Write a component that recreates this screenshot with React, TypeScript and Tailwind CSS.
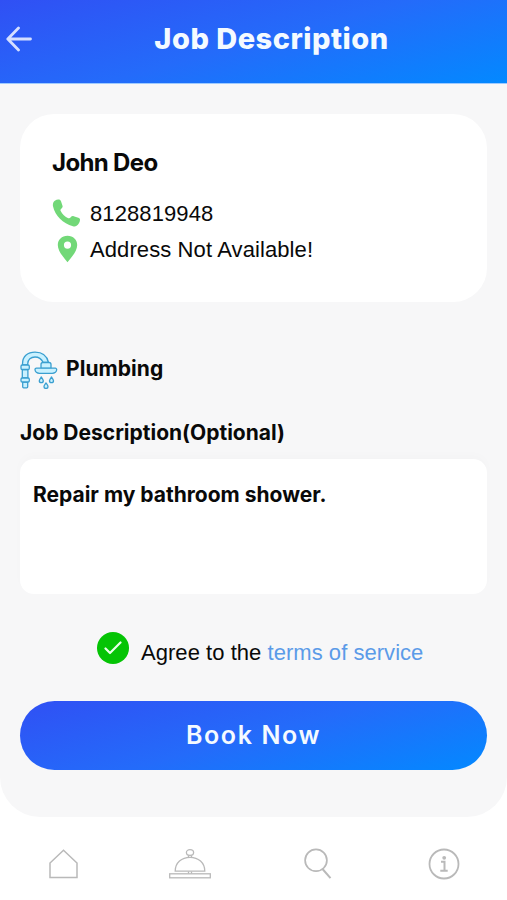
import { useState } from "react";

function ShowerIcon() {
  return (
    <svg
      width="38"
      height="38"
      viewBox="0 0 38 38"
      fill="#c9f1ff"
      stroke="#3a9fd0"
      strokeWidth="1.3"
      strokeLinejoin="round"
    >
      <path d="M2.5 14v-1C2.5 5 8 1.2 15 1.2S27 5 28.5 11.5h-5.3C21.5 8 19 6 15 6s-7.300 2.500-7.300 7v1z" />
      <path d="M2.300 18.500h5.600v8.500H2.300zM2.700 31h5v4.800a1 1 0 0 1-1 1h-3a1 1 0 0 1-1-1z" />
      <rect x="1" y="14" width="8.300" height="4.500" rx="1.200" />
      <rect x="1" y="27" width="8.300" height="4" rx="1.200" />
      <path d="M21 17.500v-4a2 2 0 0 1 2-2h6a2 2 0 0 1 2 2v4z" />
      <path d="M16.500 17.200h18.800a1.400 1.400 0 0 1 1.400 1.400c0 2-2 3.700-4.500 3.700H19.500c-2.500 0-4.500-1.700-4.500-3.700a1.400 1.400 0 0 1 1.500-1.400z" />
      <path d="M21.300 26c1.300 1.800 2 2.700 2 3.700a2 2 0 0 1-4 0c0-1 .7-1.900 2-3.700z" />
      <path d="M31.500 26c1.300 1.800 2 2.700 2 3.700a2 2 0 0 1-4 0c0-1 .7-1.900 2-3.700z" />
      <path d="M26 32c1.300 1.800 2 2.500 2 3.500a2 2 0 0 1-4 0c0-1 .7-1.700 2-3.500z" />
    </svg>
  );
}

function BottomNav() {
  return (
    <nav className="grid h-[83px] grid-cols-4 items-center justify-items-center bg-white pt-[10px] text-[#b9b9b9]">
      <button aria-label="Home">
        <svg width="44" height="34" viewBox="0 0 44 34" fill="none" stroke="currentColor" strokeWidth="1.500">
          <path d="M9 30.500V16L22.500 3.200 36 16v14.500z" />
        </svg>
      </button>
      <button aria-label="Services">
        <svg width="44" height="34" viewBox="0 0 44 34" fill="none" stroke="currentColor" strokeWidth="1.300">
          <ellipse cx="22" cy="5.500" rx="3.600" ry="2.900" />
          <path d="M20.500 8.200v2M23.500 8.200v2M20.500 24.500v2M23.500 24.500v2" />
          <path d="M7.200 24.200C7.200 15.700 13.700 10.300 22 10.300S36.800 15.700 36.800 24.200z" />
          <rect x="1.700" y="26.800" width="40.600" height="4" />
        </svg>
      </button>
      <button aria-label="Search">
        <svg width="44" height="34" viewBox="0 0 44 34" fill="none" stroke="currentColor" strokeWidth="1.700">
          <circle cx="21" cy="13.300" r="10.900" />
          <path d="M27.500 22l8 9.200" strokeWidth="2" />
        </svg>
      </button>
      <button aria-label="Info">
        <svg width="44" height="34" viewBox="0 0 44 34" fill="none" stroke="currentColor" strokeWidth="1.800">
          <circle cx="22" cy="17" r="14.500" />
          <circle cx="22.200" cy="10.800" r="1.900" fill="currentColor" stroke="none" />
          <path d="M19 14.800h3.500v8.700M18.300 23.700h7.400" strokeWidth="2" />
        </svg>
      </button>
    </nav>
  );
}

export default function App() {
  const [description, setDescription] = useState("Repair my bathroom shower.");
  const [agreed, setAgreed] = useState(true);

  return (
    <div className="flex h-[900px] w-[507px] flex-col overflow-hidden bg-white font-['Inter','Liberation_Sans',sans-serif] text-[#090909]">
      <header className="grid h-[84px] shrink-0 grid-cols-[40px_1fr_40px] items-center border-b border-[#9fcbff] bg-linear-[165deg] from-[#3050f4] via-[#246bfa] to-[#0389ff] bg-origin-border pb-1.5">
        <button aria-label="Back" className="pl-1.5">
          <svg width="27" height="26" viewBox="0 0 27 26" fill="none" stroke="#d5dfff" strokeWidth="2.800" strokeLinecap="round" strokeLinejoin="round">
            <path d="M24.500 13H2M12.500 2L1.800 13l10.700 11" />
          </svg>
        </button>
        <h1 className="pl-9 text-center text-[29px] leading-9 font-extrabold tracking-[0.5px] whitespace-nowrap text-[#f4faff]">
          Job Description
        </h1>
      </header>

      <main className="flex h-[733px] shrink-0 flex-col rounded-b-[40px] bg-[#f7f7f8] px-5 pt-[30px]">
        <section className="h-[188px] rounded-[34px] bg-white px-8 pt-[33px]">
          <h2 className="text-2xl font-bold tracking-[-0.65px]">John Deo</h2>
          <div className="mt-4 flex h-9 items-center gap-2.5 font-['Liberation_Sans',sans-serif] text-[22px] tracking-[0.1px]">
            <svg width="28" height="28" viewBox="0 0 28 28" fill="#72d878">
              <path d="M2.800 1.700C4.500.5 6.500.2 7.800.8c.7.300 1 .9 1.300 1.700l1.400 4.200c.4 1.300 0 2-1 2.800-1 .8-1.300 1.500-.8 2.600 1.500 3.200 4.300 5.800 7.600 7.100 1 .4 1.600.1 2.400-.9.900-1.100 1.700-1.500 3-1.100l4.600 1.500c1.200.4 1.800 1 1.700 2.200-.2 2.200-1.500 4.500-3.400 5.900-1 .8-2.300.9-3.700.5C11 24.700 3 16.600 1 7.300c-.4-2.200.2-4.500 1.800-5.600z" />
            </svg>
            <span>8128819948</span>
          </div>
          <div className="flex h-9 items-center gap-2.5 font-['Liberation_Sans',sans-serif] text-[22px] tracking-[0.1px]">
            <svg width="28" height="28" viewBox="0 0 28 28" fill="#72d878">
              <path fillRule="evenodd" d="M15.500.8C9.800.8 5.800 4.800 5.800 10c0 6.500 6.500 13 9.700 17.300C18.700 23 25.200 16.500 25.200 10c0-5.200-4-9.200-9.700-9.200zm0 5.700a3.600 3.600 0 1 1 0 7.200 3.600 3.600 0 0 1 0-7.200z" />
            </svg>
            <span>Address Not Available!</span>
          </div>
        </section>

        <div className="mt-[49px] flex items-center gap-2">
          <ShowerIcon />
          <span className="pb-0.5 text-[21px] font-bold tracking-[0.05px]">Plumbing</span>
        </div>

        <label htmlFor="description" className="mt-7 text-[21px] leading-8 font-bold whitespace-nowrap">
          Job Description(Optional)
        </label>
        <textarea
          id="description"
          value={description}
          onChange={(e) => setDescription(e.target.value)}
          className="mt-[10px] h-[135px] shrink-0 resize-none rounded-[14px] bg-white px-[13px] pt-5 text-[21px] leading-8 font-bold shadow-[0_-4px_10px_rgba(0,0,0,0.015)] outline-none"
        />

        <div className="mt-[38px] flex h-8 items-center gap-3 pl-[77px] font-['Liberation_Sans',sans-serif] text-[22px] tracking-[0.04px] whitespace-nowrap">
          <button
            aria-label="Agree"
            onClick={() => setAgreed(!agreed)}
            className="flex size-8 shrink-0 items-center justify-center rounded-full bg-[#05c405]"
          >
            {agreed && (
              <svg width="18" height="14" viewBox="0 0 18 14" fill="none" stroke="#e9ffe9" strokeWidth="2.200" strokeLinecap="round" strokeLinejoin="round">
                <path d="M1.500 7.500l4.500 4.500L16.500 1.500" />
              </svg>
            )}
          </button>
          <span className="pt-2">
            Agree to the <a className="text-[#5b9be8]">terms of service</a>
          </span>
        </div>

        <button className="mt-[37px] h-[69px] shrink-0 rounded-full bg-linear-[165deg] from-[#3050f4] via-[#246bfa] to-[#0389ff] text-[25px] font-semibold tracking-[1.600px] text-[#f4faff]">
          Book Now
        </button>
      </main>

      <BottomNav />
    </div>
  );
}
